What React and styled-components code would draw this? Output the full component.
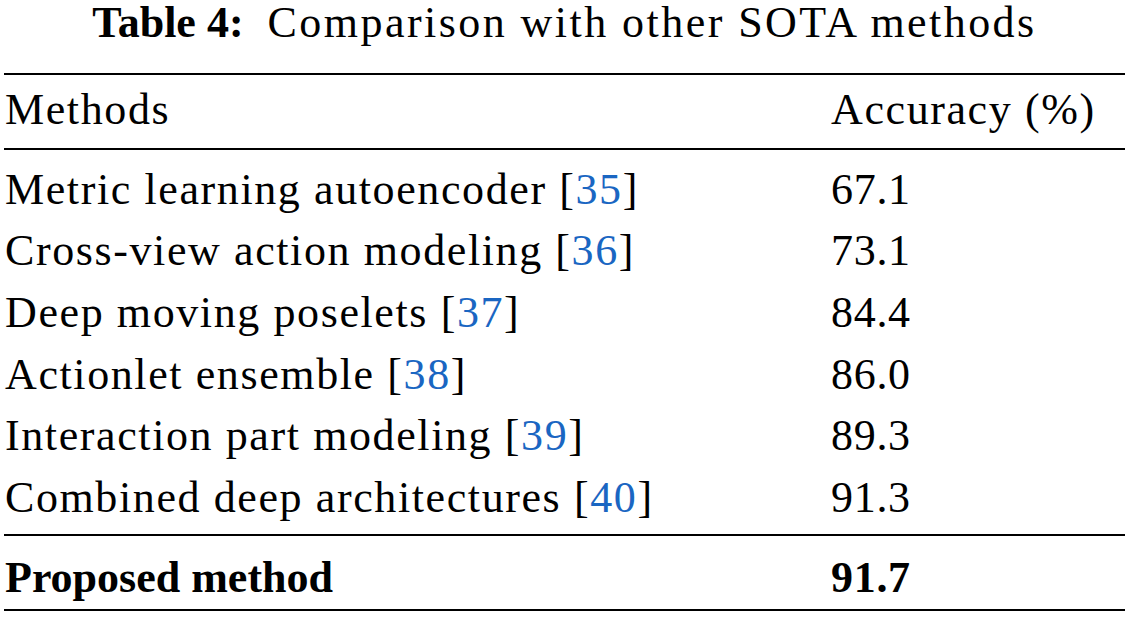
import React from "react";
import styled, { createGlobalStyle } from "styled-components";

const GlobalStyle = createGlobalStyle`
  html, body {
    margin: 0;
    padding: 0;
    background: #ffffff;
  }
  body {
    font-family: "Liberation Serif", "Times New Roman", serif;
    color: #000000;
  }
`;

const Page = styled.div`
  width: 1129px;
  box-sizing: border-box;
  padding: 0 4px;
`;

const Caption = styled.div`
  text-align: center;
  font-size: 44px;
  line-height: 46px;
  letter-spacing: 2.45px;
  margin-bottom: 27px;
  white-space: nowrap;
`;

const CaptionLabel = styled.span`
  font-weight: bold;
  letter-spacing: 0;
  margin-right: 24px;
`;

const Table = styled.div`
  border-top: 2px solid #000;
`;

const Section = styled.div`
  padding-top: ${(p) => p.$top}px;
  padding-bottom: ${(p) => p.$bottom}px;
  border-bottom: 2px solid #000;
`;

const Row = styled.div`
  display: grid;
  grid-template-columns: 826px 1fr;
  font-size: 44px;
  line-height: 61.6px;
  font-weight: ${(p) => (p.$bold ? "bold" : "normal")};
  white-space: nowrap;
`;

const Cell = styled.div`
  padding-left: 1px;
  letter-spacing: ${(p) => (p.$numeric ? "0.7px" : p.$bold ? "0" : "1.6px")};
`;

const Ref = styled.span`
  color: #1a66c2;
`;

const rows = [
  { name: "Metric learning autoencoder", ref: "35", acc: "67.1" },
  { name: "Cross-view action modeling", ref: "36", acc: "73.1" },
  { name: "Deep moving poselets", ref: "37", acc: "84.4" },
  { name: "Actionlet ensemble", ref: "38", acc: "86.0" },
  { name: "Interaction part modeling", ref: "39", acc: "89.3" },
  { name: "Combined deep architectures", ref: "40", acc: "91.3" },
];

export default function App() {
  return (
    <>
      <GlobalStyle />
      <Page>
        <Caption>
          <CaptionLabel>Table 4:</CaptionLabel>Comparison with other SOTA methods
        </Caption>
        <Table>
          <Section $top={4.4} $bottom={7.5}>
            <Row>
              <Cell>Methods</Cell>
              <Cell>Accuracy (%)</Cell>
            </Row>
          </Section>
          <Section $top={8.3} $bottom={5.6}>
            {rows.map((r) => (
              <Row key={r.ref}>
                <Cell>
                  {r.name} [<Ref>{r.ref}</Ref>]
                </Cell>
                <Cell $numeric>{r.acc}</Cell>
              </Row>
            ))}
          </Section>
          <Section $top={11.4} $bottom={0}>
            <Row $bold>
              <Cell $bold>Proposed method</Cell>
              <Cell $numeric>91.7</Cell>
            </Row>
          </Section>
        </Table>
      </Page>
    </>
  );
}
